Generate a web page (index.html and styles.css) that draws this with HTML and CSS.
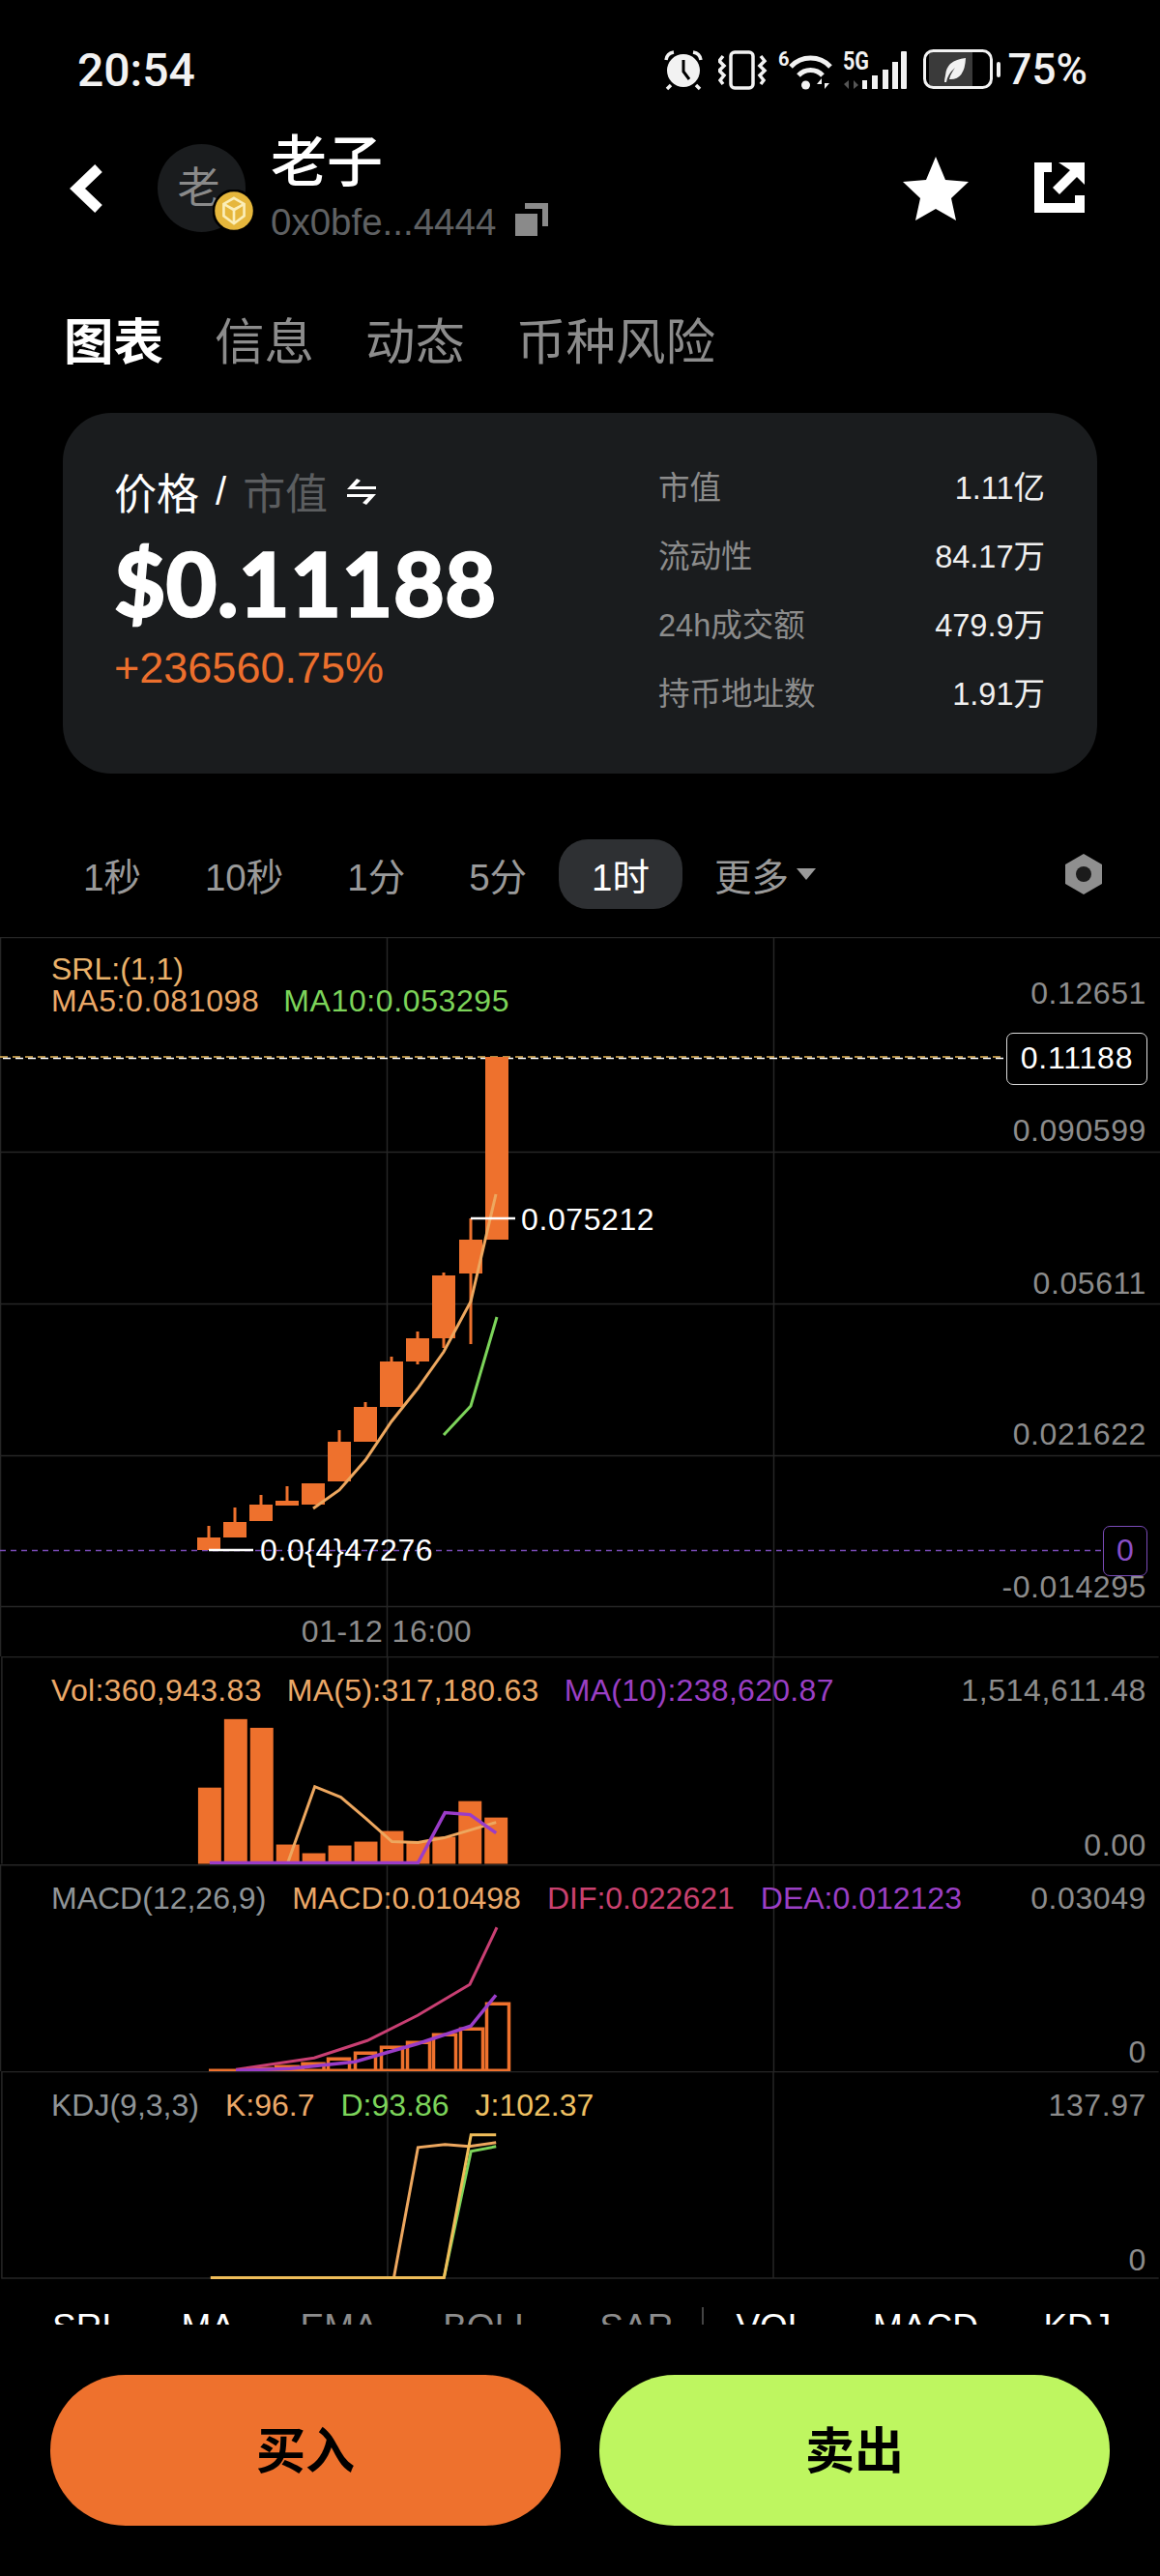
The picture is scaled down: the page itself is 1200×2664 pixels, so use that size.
FILE: index.html
```html
<!DOCTYPE html>
<html lang="zh">
<head>
<meta charset="utf-8">
<title>老子</title>
<link rel="stylesheet" href="styles.css">
</head>
<body>
<div class="page">
  <div class="status">
    <span class="time">20:54</span>
    <div class="status-right">
      <svg class="si si-alarm" viewBox="690 50 56 44"><circle cx="710" cy="73" r="17" fill="#f2f2f2"/><path d="M710 62v12l6 8" fill="none" stroke="#000" stroke-width="3"/><path d="M692 62q1-7 8-8M728 62q-1-7-8-8M697 88l-4 4M723 88l4 4" fill="none" stroke="#f2f2f2" stroke-width="3.5"/></svg>
      <svg class="si si-vib" viewBox="746 50 62 44"><rect x="759" y="54" width="23" height="37" rx="4" fill="none" stroke="#f2f2f2" stroke-width="3.5"/><path d="M751 58l-4 5 5 5-5 5 5 5-4 5 3 4M790 58l4 5-5 5 5 5-5 5 4 5-3 4" fill="none" stroke="#f2f2f2" stroke-width="3.5"/></svg>
      <svg class="si si-wifi" viewBox="808 50 67 44"><path d="M821 69a28 28 0 0 1 41 0M829 78a17 17 0 0 1 25 0" fill="none" stroke="#f2f2f2" stroke-width="5"/><circle cx="836.500" cy="88" r="4.500" fill="#f2f2f2"/><text class="si-text" x="808" y="68">6</text><path d="M853 92V81l-5 6h5zM856 81v11l5-6h-5z" fill="#f2f2f2"/></svg>
      <svg class="si si-cell" viewBox="875 50 83 44"><text class="si-text si-5g" x="875" y="72" textLength="27" lengthAdjust="spacingAndGlyphs">5G</text><path d="M881 83v9l-5-5zM886 92v-9l5 5z" fill="#555"/><rect x="895" y="83" width="5" height="9" fill="#f2f2f2"/><rect x="905" y="78" width="6" height="14" fill="#f2f2f2"/><rect x="916" y="72" width="6" height="20" fill="#f2f2f2"/><rect x="926" y="64" width="6" height="28" fill="#f2f2f2"/><rect x="935" y="53" width="6" height="39" rx="1" fill="#f2f2f2"/></svg>
      <svg class="si si-batt" viewBox="958 50 88 44"><path d="M964 54h45v36h-45z" fill="#3a3a3a"/><rect x="959.500" y="52.500" width="69" height="38" rx="9" fill="none" stroke="#f2f2f2" stroke-width="3"/><rect x="1034" y="64" width="4" height="16" rx="2" fill="#f2f2f2"/><path d="M1002 60q-20 2-21 18-1 4-1 7l2 0q1-8 9-15-5 7-6 12 16 1 17-22z" fill="#f2f2f2"/></svg>
      <span class="pct">75%</span>
    </div>
  </div>

  <header class="head">
    <svg class="back" viewBox="0 0 34 50"><path d="M30 4L8 25l22 21" fill="none" stroke="#fff" stroke-width="11"/></svg>
    <div class="avatar">老
      <svg class="badge" viewBox="0 0 50 50"><circle cx="25" cy="25" r="24" fill="#e6b73c" stroke="#000" stroke-width="3"/><path d="M25 10l12 7v14l-12 9-12-9V17zM13 17l12 7 12-7M25 24v16M19 20.500l6 3 6-3" fill="none" stroke="#fbeeb8" stroke-width="3"/></svg>
    </div>
    <div class="name">
      <div class="name-title">老子</div>
      <div class="name-addr">0x0bfe...4444
        <svg class="copy" viewBox="0 0 34 34"><path d="M10 0h24v24h-6V6H10z" fill="#8a8a8a"/><rect x="0" y="11" width="23" height="23" fill="#8a8a8a"/></svg>
      </div>
    </div>
    <div class="head-actions">
      <svg class="star" viewBox="0 0 68 66"><path d="M34 0l10 24 24 2-18 17 5 23-21-12-21 12 5-23L0 26l24-2z" fill="#fff"/></svg>
      <svg class="share" viewBox="0 0 52 52"><path d="M18 5H5v42h42V34" fill="none" stroke="#fff" stroke-width="10"/><path d="M25 0h27v23l-8-8-18 18-7-7 18-18z" fill="#fff"/></svg>
    </div>
  </header>

  <nav class="tabs">
    <span class="tab on">图表</span><span class="tab">信息</span><span class="tab">动态</span><span class="tab">币种风险</span>
  </nav>

  <section class="card">
    <div class="card-left">
      <div class="switch"><span>价格</span><span class="slash">/</span><span class="muted">市值</span>
        <svg class="swap" viewBox="0 0 30 27"><path d="M10 0L0 11h30V8H8l6-6zM20 27l10-11H0v3h22l-6 6z" fill="#fff"/></svg>
      </div>
      <div class="price">$0.11188</div>
      <div class="change">+236560.75%</div>
    </div>
    <dl class="stats">
      <div class="stat"><dt>市值</dt><dd>1.11亿</dd></div>
      <div class="stat"><dt>流动性</dt><dd>84.17万</dd></div>
      <div class="stat"><dt>24h成交额</dt><dd>479.9万</dd></div>
      <div class="stat"><dt>持币地址数</dt><dd>1.91万</dd></div>
    </dl>
  </section>

  <div class="frames">
    <span class="frame">1秒</span><span class="frame">10秒</span><span class="frame">1分</span><span class="frame">5分</span><span class="frame active">1时</span><span class="more">更多<i class="caret"></i></span>
    <svg class="hex" viewBox="0 0 42 42"><path d="M21 0l19 11v20L21 42 2 31V11z" fill="#8f8f8f"/><circle cx="21" cy="21" r="8" fill="#1b1b1b"/></svg>
  </div>

  <section class="chart">
    <div class="panel p-main">
      <svg class="plot" viewBox="0 969 1200 744">
        <g class="grid"><path d="M.5 969v744M400.500 969v744M800.500 969v744M0 969.500h1200M0 1191.500h1200M0 1348.500h1200M0 1505.500h1200M0 1661.500h1200"/></g>
        <path d="M0 1093h1040" stroke="#e8b85a" stroke-width="1.500" stroke-dasharray="8 5" fill="none"/>
        <path d="M3 1094.500h1037" stroke="#fff" stroke-width="1.500" stroke-dasharray="8 5" fill="none"/>
        <path d="M0 1603.500h1141" stroke="#7a4bb8" stroke-width="1.500" stroke-dasharray="6 5" fill="none"/>
        <g class="wick"><path d="M216 1578v25M243 1559v31M270 1546v27M297 1537v20M351 1479v53M378 1450v41M405 1403v52M432 1377v34M459 1316v78M487 1260v130"/></g>
        <g class="candle">
          <rect x="204" y="1590" width="24" height="13"/><rect x="231" y="1574" width="24" height="16"/><rect x="258" y="1556" width="24" height="17"/><rect x="285" y="1552" width="24" height="5"/><rect x="312" y="1534" width="24" height="22"/><rect x="339" y="1491" width="24" height="41"/><rect x="366" y="1455" width="24" height="36"/><rect x="393" y="1408" width="24" height="47"/><rect x="420" y="1384" width="24" height="24"/><rect x="447" y="1319" width="24" height="65"/><rect x="475" y="1282" width="24" height="35"/><rect x="502" y="1093" width="24" height="189"/>
        </g>
        <path d="M324 1560L351 1541 378 1510 405 1470 432 1436 459 1398 487 1346 513 1235" class="l-ma5"/>
        <path d="M459 1484L487 1454 514 1362" class="l-green"/>
        <path d="M487 1260h46M216 1603h46" stroke="#fff" stroke-width="2.500" fill="none"/>
      </svg>
      <div class="legend-stack">
        <div class="legend"><span class="c-srl">SRL:(1,1)</span></div>
        <div class="legend wide"><span class="c-orange">MA5:0.081098</span><span class="c-green">MA10:0.053295</span></div>
      </div>
      <span class="tick t1">0.12651</span>
      <span class="tick t2">0.090599</span>
      <span class="tick t3">0.05611</span>
      <span class="tick t4">0.021622</span>
      <span class="tick t5">-0.014295</span>
      <span class="price-tag">0.11188</span>
      <span class="zero-tag">0</span>
      <span class="mark m-high">0.075212</span>
      <span class="mark m-low">0.0{4}47276</span>
      <span class="date">01-12 16:00</span>
    </div>

    <div class="panel p-sub">
      <svg class="plot" viewBox="0 1713 1200 215">
        <g class="grid"><path d="M.5 1713v215M400.500 1713v215M800.500 1713v215M0 1713.500h1200"/></g>
        <g class="candle">
          <rect x="204" y="1849" width="24" height="79"/><rect x="231" y="1778" width="24" height="150"/><rect x="258" y="1787" width="24" height="141"/><rect x="285" y="1908" width="24" height="20"/><rect x="312" y="1917" width="24" height="11"/><rect x="339" y="1909" width="24" height="19"/><rect x="366" y="1905" width="24" height="23"/><rect x="393" y="1894" width="24" height="34"/><rect x="420" y="1905" width="24" height="23"/><rect x="447" y="1900" width="24" height="28"/><rect x="474" y="1863" width="24" height="65"/><rect x="501" y="1880" width="24" height="48"/>
        </g>
        <path d="M297 1927L325 1848 352 1859 378 1881 405 1905 432 1906 459 1901 486 1893 513 1885" class="l-ma5"/>
        <path d="M216 1927H432L460 1875 486 1877 513 1896" class="l-purple"/>
      </svg>
      <div class="legend mid"><span class="c-orange">Vol:360,943.83</span><span class="c-orange">MA(5):317,180.63</span><span class="c-purple">MA(10):238,620.87</span><span class="axis-top">1,514,611.48</span></div>
      <div class="axis-bottom">0.00</div>
    </div>

    <div class="panel p-sub">
      <svg class="plot" viewBox="0 1928 1200 214">
        <g class="grid"><path d="M.5 1928v214M400.500 1928v214M800.500 1928v214M0 1928.500h1200"/></g>
        <g class="hollow">
          <path d="M258.500 2142v-3h23v3M285.500 2142v-5h23v5M313 2142v-8h22v8M339.500 2142v-13h22v13M367.500 2142v-19h21v19M394.500 2142v-25h22v25M421.500 2142v-30h23v30M448.500 2142v-38h23v38M476.500 2142v-44h23v44M503.500 2142v-70h23v70"/>
          <path d="M216 2141h310"/>
        </g>
        <path d="M244 2140L325 2128 380 2110 432 2084 486 2052 514 1993" class="l-dif"/>
        <path d="M244 2141L300 2139 367 2132 433 2113 487 2095 513 2063" class="l-purple"/>
      </svg>
      <div class="legend"><span class="c-grey">MACD(12,26,9)</span><span class="c-orange">MACD:0.010498</span><span class="c-pink">DIF:0.022621</span><span class="c-purple">DEA:0.012123</span><span class="axis-top">0.03049</span></div>
      <div class="axis-bottom">0</div>
    </div>

    <div class="panel p-sub">
      <svg class="plot" viewBox="0 2142 1200 215">
        <g class="grid"><path d="M.5 2142v215M400.500 2142v215M800.500 2142v215M0 2142.500h1200M0 2356.500h1200"/></g>
        <path d="M459 2356L487 2225 513 2220" class="l-green"/>
        <path d="M217 2356H407L432 2221 460 2218 485 2220 513 2216" class="l-ma5"/>
        <path d="M217 2356H459L487 2208H513" class="l-j"/>
      </svg>
      <div class="legend"><span class="c-grey">KDJ(9,3,3)</span><span class="c-orange">K:96.7</span><span class="c-green">D:93.86</span><span class="c-yellow">J:102.37</span><span class="axis-top">137.97</span></div>
      <div class="axis-bottom">0</div>
    </div>
  </section>

  <div class="indicators">
    <span class="ind">SRL</span><span class="ind ind-ma">MA</span><span class="ind dim">EMA</span><span class="ind dim">BOLL</span><span class="ind dim">SAR</span><i class="ind-sep"></i><span class="ind">VOL</span><span class="ind">MACD</span><span class="ind">KDJ</span>
  </div>

  <div class="actions">
    <button class="btn buy">买入</button>
    <button class="btn sell">卖出</button>
  </div>
</div>
</body>
</html>
```

FILE: styles.css
```css
* { box-sizing: border-box; }
html, body { margin: 0; padding: 0; background: #000; }
body { font-family: "Liberation Sans", "Noto Sans CJK SC", sans-serif; color: #fff; }
.page { width: 1200px; height: 2664px; overflow: hidden; background: #000; }

/* status bar */
.status { display: flex; align-items: center; height: 144px; padding: 0 75px 0 80px; }
.time { font-family: Roboto, sans-serif; font-size: 48px; font-weight: 500; color: #f2f2f2; }
.status-right { display: flex; align-items: center; margin-left: auto; }
.si { display: block; height: 44px; }
.si-alarm { width: 56px; }
.si-vib { width: 62px; }
.si-wifi { width: 67px; }
.si-cell { width: 83px; }
.si-batt { width: 88px; }
.si-text { font-family: Roboto, sans-serif; font-size: 20px; font-weight: 700; fill: #f2f2f2; }
.si-5g { font-size: 25px; }
.pct { font-family: Roboto, sans-serif; font-size: 44px; font-weight: 500; color: #f2f2f2; }

/* header */
.head { display: flex; align-items: center; height: 101px; padding: 0 78px 0 72px; }
.back { width: 34px; height: 50px; }
.avatar { position: relative; width: 91px; height: 91px; margin-left: 57px; border-radius: 50%; background: #1a1c1e; color: #8a8a8a; font-size: 44px; line-height: 91px; text-align: center; flex: none; padding-right: 6px; }
.badge { position: absolute; right: -10px; bottom: 0; width: 44px; height: 44px; }
.name { margin-left: 26px; }
.name-title { font-size: 58px; line-height: 68px; font-weight: 500; margin-top: -6px; }
.name-addr { display: flex; align-items: center; font-size: 38.500px; line-height: 40px; color: #5f6163; margin-top: 8px; }
.copy { width: 34px; height: 34px; margin-left: 20px; margin-top: -6px; }
.head-actions { display: flex; align-items: center; margin-left: auto; gap: 68px; }
.star { width: 68px; height: 66px; }
.share { width: 52px; height: 52px; margin-top: -2px; }

/* tabs */
.tabs { display: flex; gap: 53px; padding: 68px 0 0 66px; }
.tab { font-size: 51.500px; line-height: 82px; color: #8c8c8c; }
.tab.on { color: #fff; font-weight: 700; }

/* card */
.card { display: flex; justify-content: space-between; height: 373px; margin: 32px 65px 0; padding: 0 54px 0 53px; border-radius: 50px; background: #1a1c1e; }
.card-left { padding-top: 51px; }
.switch { display: flex; align-items: center; height: 60px; font-size: 44px; gap: 17px; }
.slash { font-size: 40px; }
.muted { color: #5c5e60; }
.swap { width: 30px; height: 27px; margin-left: 3px; }
.price { font-family: Lato, "Liberation Sans", sans-serif; font-weight: 900; font-size: 92px; line-height: 110px; margin-top: 10px; -webkit-text-stroke: 1.500px #fff; }
.change { font-size: 45px; line-height: 60px; margin-top: 3px; color: #ec6f2d; }
.stats { width: 400px; margin: 0; padding-top: 39px; }
.stat { display: flex; justify-content: space-between; align-items: center; height: 71px; font-size: 32.500px; }
.stat dt { color: #8c8c8c; }
.stat dd { margin: 0; color: #f0f0f0; }

/* time frames */
.frames { display: flex; align-items: center; height: 72px; margin-top: 68px; padding: 0 58px 0 53px; font-size: 38.500px; color: #9a9a9a; }
.frame { display: flex; align-items: center; height: 72px; padding: 0 33px; }
.frame.active { padding: 0 34px; border-radius: 30px; background: #2e3033; color: #fff; }
.more { display: flex; align-items: center; margin-left: 33px; }
.caret { width: 0; height: 0; margin-left: 8px; border-left: 10px solid transparent; border-right: 10px solid transparent; border-top: 12px solid #9a9a9a; }
.hex { width: 42px; height: 42px; margin-left: auto; }

/* chart */
.chart { margin-top: 29px; font-size: 32px; line-height: 33px; color: #8c8c8c; }
.panel { position: relative; display: flex; flex-direction: column; justify-content: space-between; }
.p-main { height: 744px; }
.p-sub { height: 214.500px; padding-bottom: 3px; }
.plot { position: absolute; left: 0; top: 0; width: 100%; height: 100%; }
.plot path { fill: none; }
.grid path { stroke: #262626; stroke-width: 1.500; }
.candle rect { fill: #ee712d; }
.wick path { stroke: #ee712d; stroke-width: 3; }
.hollow path { stroke: #ee712d; stroke-width: 3.500; }
.l-ma5 { stroke: #eda75f; stroke-width: 3; }
.l-green { stroke: #7cd45a; stroke-width: 3; }
.l-purple { stroke: #9a3cc8; stroke-width: 3.500; }
.l-dif { stroke: #c93f73; stroke-width: 3; }
.l-j { stroke: #efbd5a; stroke-width: 3; }

.legend-stack { position: relative; padding-top: 17px; }
.legend { position: relative; display: flex; gap: 27px; padding: 0 14px 0 53px; }
.p-sub .legend { padding-top: 19px; }
.legend.wide { letter-spacing: .6px; gap: 25px; }
.legend.mid { letter-spacing: .3px; gap: 26px; }
.axis-top { margin-left: auto; letter-spacing: .6px; }
.axis-bottom { position: relative; text-align: right; padding-right: 14px; letter-spacing: .6px; }
.c-srl { color: #eab26a; }
.c-orange { color: #eba868; }
.c-green { color: #7cd45a; }
.c-purple { color: #9a3fc4; }
.c-pink { color: #c9416f; }
.c-grey { color: #8f9497; }
.c-yellow { color: #efc062; }

.tick { position: absolute; right: 14px; letter-spacing: .6px; }
.t1 { top: 42px; }
.t2 { top: 184px; }
.t3 { top: 342px; }
.t4 { top: 498px; }
.t5 { top: 656px; }
.price-tag { position: absolute; left: 1041px; top: 99px; width: 146px; height: 54px; border: 1.500px solid #ddd; border-radius: 7px; background: #000; color: #fff; text-align: center; line-height: 51px; letter-spacing: .8px; }
.zero-tag { position: absolute; left: 1141px; top: 609px; width: 46px; height: 52px; border: 1.500px solid #7a4bb8; border-radius: 7px; background: #000; color: #8a4fc8; text-align: center; line-height: 49px; }
.mark { position: absolute; color: #fff; letter-spacing: .6px; }
.m-high { left: 539px; top: 276px; }
.m-low { left: 269px; top: 618px; }
.date { position: absolute; left: 400px; top: 702px; transform: translateX(-50%); white-space: nowrap; letter-spacing: .5px; }

/* indicator strip, clipped */
.indicators { display: flex; align-items: flex-start; height: 47px; padding: 29px 0 0 54px; overflow: hidden; font-size: 37px; line-height: 42px; color: #fff; gap: 67.500px; }
.ind { flex: none; }
.ind-ma { margin-left: -6px; }
.dim { color: #8c8c8c; }
.ind-sep { flex: none; width: 2px; height: 30px; margin: 0 -34px 0 -38px; background: #444; }

/* buy / sell */
.actions { display: flex; gap: 40px; margin-top: 52px; padding: 0 52px; }
.btn { flex: 1; height: 156px; padding: 0 0 6px; border: 0; border-radius: 78px; color: #000; font-family: inherit; font-size: 51px; font-weight: 700; }
.buy { background: #ee712d; }
.sell { background: #bef660; }
```
